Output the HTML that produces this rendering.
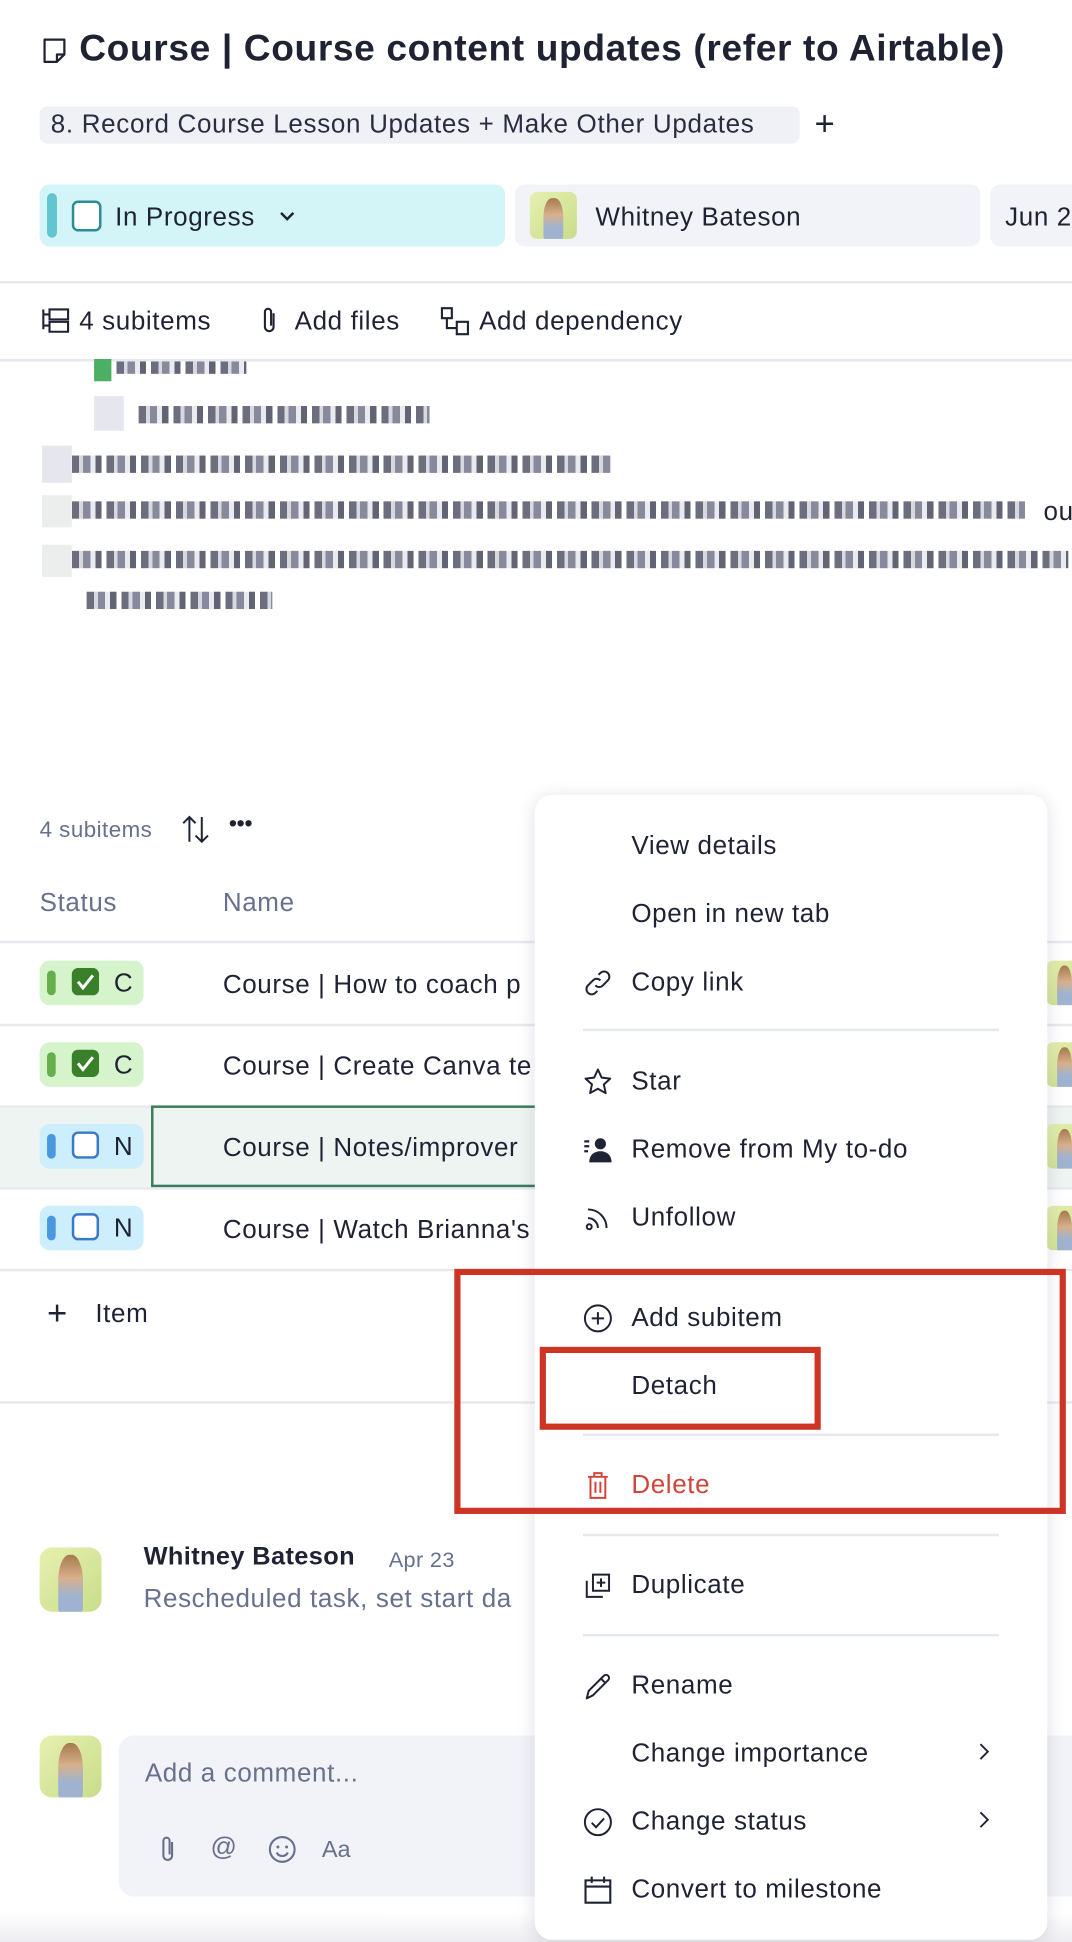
<!DOCTYPE html>
<html><head><meta charset="utf-8"><style>
html,body{margin:0;padding:0;background:#fff;overflow:hidden}
body{width:1072px;height:1942px;position:relative}
#w{position:absolute;left:0;top:0;width:866px;height:1569px;transform:scale(1.2379);transform-origin:0 0;font-family:"Liberation Sans",sans-serif;color:#1f2233}
.a{position:absolute;white-space:nowrap}
.t21{font-size:21px;letter-spacing:0.5px}
.line{position:absolute;height:1.5px;background:#e8e9f0}
.blur{position:absolute;height:14px;background:repeating-linear-gradient(90deg,#3a3d52 0 6px,#c9cbd6 6px 9px,#60637a 9px 15px,#e3e4ea 15px 19px,#2e3045 19px 24px,#fff 24px 28px);opacity:.75}
.chip{position:absolute;left:32px;width:84px;height:36px;border-radius:8px}
.bar{position:absolute;left:6px;top:8px;width:7px;height:20px;border-radius:4px}
.cb{position:absolute;left:26px;top:6px;width:22px;height:22px;border-radius:5px;box-sizing:border-box}
.mi{position:absolute;left:510px;font-size:21px;letter-spacing:0.5px;color:#1f2233;white-space:nowrap}
.ic{position:absolute;left:471px;width:24px;height:24px}
.sep{position:absolute;left:471px;width:336px;height:2px;background:#e6e8f0}
.av{position:absolute;border-radius:10px;background:linear-gradient(135deg,#e6f0b0,#c9dd8a);overflow:hidden}
.av:after{content:"";position:absolute;left:30%;top:12%;width:40%;height:90%;border-radius:45% 45% 10% 10%;background:linear-gradient(#a57a4e,#d8b08c 40%,#9fb3d0 70%)}
</style></head><body><div id="w">

<svg class="a" style="left:34px;top:30px" width="20" height="22" viewBox="0 0 20 22"><path d="M2 2h16v12l-6 6H2z M12 20v-6h6" fill="none" stroke="#1f2233" stroke-width="1.8" stroke-linejoin="round"/></svg>
<div class="a" style="left:64px;top:23px;font-size:30px;font-weight:bold;letter-spacing:0.5px">Course | Course content updates (refer to Airtable)</div>
<div class="a" style="left:32px;top:86px;width:614px;height:30px;background:#f0f1f7;border-radius:6px"></div>
<div class="a t21" style="left:41px;top:89px;color:#2a2d40;letter-spacing:0.55px">8. Record Course Lesson Updates + Make Other Updates</div>
<div class="a" style="left:658px;top:84px;font-size:28px;font-weight:300">+</div>

<div class="a" style="left:32px;top:149px;width:376px;height:50px;background:#d3f5f8;border-radius:8px"></div>
<div class="a" style="left:38px;top:156px;width:8px;height:36px;background:#62c5cf;border-radius:4px"></div>
<div class="a" style="left:58px;top:162px;width:24px;height:25px;border:2px solid #2f8c96;border-radius:5px;box-sizing:border-box;background:#fff"></div>
<div class="a t21" style="left:93px;top:164px">In Progress</div>
<svg class="a" style="left:225px;top:168px" width="14" height="14"><path d="M2 4l5 5 5-5" fill="none" stroke="#1f2233" stroke-width="2"/></svg>
<div class="a" style="left:416px;top:149px;width:376px;height:50px;background:#f2f3f8;border-radius:8px"></div>
<div class="av" style="left:428px;top:155px;width:38px;height:38px;border-radius:6px"></div>
<div class="a t21" style="left:481px;top:164px">Whitney Bateson</div>
<div class="a" style="left:800px;top:149px;width:80px;height:50px;background:#f2f3f8;border-radius:8px"></div>
<div class="a t21" style="left:812px;top:164px">Jun 2</div>

<div class="line" style="left:0;top:227px;width:866px"></div>
<svg class="a" style="left:33px;top:248px" width="24" height="22" viewBox="0 0 24 22"><path d="M2 2v16M2 6h5M2 15h5M7 2h15v8H7zM7 12h15v8H7z" fill="none" stroke="#1f2233" stroke-width="1.7"/></svg>
<div class="a t21" style="left:64px;top:248px">4 subitems</div>
<svg class="a" style="left:210px;top:247px" width="16" height="24" viewBox="0 0 16 24"><path d="M11 6v11a3.5 3.5 0 0 1-7 0V5a2.5 2.5 0 0 1 5 0v11" fill="none" stroke="#1f2233" stroke-width="1.7"/></svg>
<div class="a t21" style="left:238px;top:248px">Add files</div>
<svg class="a" style="left:355px;top:247px" width="26" height="26" viewBox="0 0 26 26"><path d="M2 2h8v8H2zM14 13h9v10h-9zM6 10v8h8" fill="none" stroke="#1f2233" stroke-width="1.7"/></svg>
<div class="a t21" style="left:387px;top:248px">Add dependency</div>
<div class="line" style="left:0;top:290px;width:866px"></div>

<div class="a" style="left:76px;top:290px;width:14px;height:18px;background:#4caf63"></div>
<div class="blur" style="left:94px;top:292px;width:105px;height:10px"></div>
<div class="a" style="left:76px;top:320px;width:24px;height:28px;background:#e6e7ee"></div>
<div class="blur" style="left:112px;top:328px;width:235px"></div>
<div class="a" style="left:34px;top:360px;width:24px;height:30px;background:#e6e7ee"></div>
<div class="blur" style="left:58px;top:368px;width:435px"></div>
<div class="a" style="left:34px;top:400px;width:24px;height:26px;background:#eceded"></div>
<div class="blur" style="left:58px;top:405px;width:770px"></div>
<div class="a t21" style="left:843px;top:402px">ou</div>
<div class="a" style="left:34px;top:440px;width:24px;height:26px;background:#eceded"></div>
<div class="blur" style="left:58px;top:445px;width:805px"></div>
<div class="blur" style="left:70px;top:478px;width:150px"></div>

<div class="a" style="left:32px;top:660px;font-size:18px;letter-spacing:0.4px;color:#67708c">4 subitems</div>
<svg class="a" style="left:146px;top:657px" width="24" height="26" viewBox="0 0 24 26"><path d="M7 23V3M2 8l5-5 5 5M17 3v20M12 18l5 5 5-5" fill="none" stroke="#1f2233" stroke-width="1.6"/></svg>
<div class="a" style="left:185px;top:655px;font-size:18px;font-weight:bold;letter-spacing:0px">•••</div>
<div class="a t21" style="left:32px;top:718px;color:#67708c">Status</div>
<div class="a t21" style="left:180px;top:718px;color:#67708c">Name</div>
<div class="line" style="left:0;top:760px;width:866px;height:2px"></div>
<div class="a" style="left:0;top:893px;width:866px;height:66px;background:#eef4f1"></div>
<div class="line" style="left:0;top:827px;width:866px;height:2px"></div>
<div class="line" style="left:0;top:893px;width:866px;height:2px"></div>
<div class="line" style="left:0;top:959px;width:866px;height:2px"></div>
<div class="line" style="left:0;top:1025px;width:866px;height:2px"></div>
<div class="a" style="left:122px;top:893px;width:320px;height:66px;border:2px solid #3b7c5e;box-sizing:border-box"></div>

<div class="chip" style="top:776px;background:#d5f4cc"><div class="bar" style="background:#64ae4b"></div><div class="cb" style="background:#3a7f2a"><svg width="22" height="22"><path d="M5 11l4 5 8-10" fill="none" stroke="#fff" stroke-width="2.4"/></svg></div><div class="a t21" style="left:60px;top:7px">C</div></div>
<div class="chip" style="top:842px;background:#d5f4cc"><div class="bar" style="background:#64ae4b"></div><div class="cb" style="background:#3a7f2a"><svg width="22" height="22"><path d="M5 11l4 5 8-10" fill="none" stroke="#fff" stroke-width="2.4"/></svg></div><div class="a t21" style="left:60px;top:7px">C</div></div>
<div class="chip" style="top:908px;background:#cdeefd"><div class="bar" style="background:#4a98de"></div><div class="cb" style="border:2px solid #3a78c8;background:#fff"></div><div class="a t21" style="left:60px;top:7px">N</div></div>
<div class="chip" style="top:974px;background:#cdeefd"><div class="bar" style="background:#4a98de"></div><div class="cb" style="border:2px solid #3a78c8;background:#fff"></div><div class="a t21" style="left:60px;top:7px">N</div></div>
<div class="a t21" style="left:180px;top:784px">Course | How to coach p</div>
<div class="a t21" style="left:180px;top:850px">Course | Create Canva te</div>
<div class="a t21" style="left:180px;top:916px">Course | Notes/improver</div>
<div class="a t21" style="left:180px;top:982px">Course | Watch Brianna's</div>
<div class="av" style="left:845px;top:776px;width:30px;height:36px;border-radius:6px"></div>
<div class="av" style="left:845px;top:842px;width:30px;height:36px;border-radius:6px"></div>
<div class="av" style="left:845px;top:908px;width:30px;height:36px;border-radius:6px"></div>
<div class="av" style="left:845px;top:974px;width:30px;height:36px;border-radius:6px"></div>
<div class="a" style="left:38px;top:1045px;font-size:28px;font-weight:300">+</div>
<div class="a t21" style="left:77px;top:1050px">Item</div>
<div class="line" style="left:0;top:1132px;width:866px"></div>

<div class="av" style="left:32px;top:1250px;width:50px;height:52px"></div>
<div class="a" style="left:116px;top:1246px;font-size:20.5px;font-weight:bold;letter-spacing:0.3px">Whitney Bateson</div>
<div class="a" style="left:314px;top:1250px;font-size:17.5px;letter-spacing:0.3px;color:#67708c">Apr 23</div>
<div class="a t21" style="left:116px;top:1280px;color:#67708c">Rescheduled task, set start da</div>
<div class="av" style="left:32px;top:1402px;width:50px;height:50px"></div>
<div class="a" style="left:96px;top:1402px;width:800px;height:130px;background:#f2f3f8;border-radius:12px"></div>
<div class="a t21" style="left:117px;top:1421px;color:#67708c">Add a comment...</div>
<svg class="a" style="left:128px;top:1482px" width="16" height="24" viewBox="0 0 16 24"><path d="M11 6v11a3.5 3.5 0 0 1-7 0V5a2.5 2.5 0 0 1 5 0v11" fill="none" stroke="#67708c" stroke-width="1.7"/></svg>
<div class="a" style="left:170px;top:1481px;font-size:21px;color:#67708c">@</div>
<svg class="a" style="left:216px;top:1482px" width="24" height="24" viewBox="0 0 24 24"><circle cx="12" cy="12" r="10" fill="none" stroke="#67708c" stroke-width="1.7"/><circle cx="8.5" cy="10" r="1.2" fill="#67708c"/><circle cx="15.5" cy="10" r="1.2" fill="#67708c"/><path d="M7.5 14.5a5 5 0 0 0 9 0" fill="none" stroke="#67708c" stroke-width="1.7"/></svg>
<div class="a" style="left:260px;top:1484px;font-size:19px;color:#67708c">Aa</div>
<div class="a" style="left:0;top:1545px;width:866px;height:24px;background:linear-gradient(#fff0,#ececf0)"></div>

<div class="a" style="left:432px;top:642px;width:414px;height:925px;background:#fff;border-radius:14px;box-shadow:0 2px 14px rgba(30,35,70,.14)"></div>
<div class="mi" style="top:672px">View details</div>
<div class="mi" style="top:727px">Open in new tab</div>
<svg class="ic" style="top:782px" viewBox="0 0 24 24"><path d="M10 14a4 4 0 0 0 6 0l4-4a4 4 0 0 0-6-6l-1.5 1.5M14 10a4 4 0 0 0-6 0l-4 4a4 4 0 0 0 6 6l1.5-1.5" fill="none" stroke="#1f2233" stroke-width="1.6"/></svg>
<div class="mi" style="top:782px">Copy link</div>
<div class="sep" style="top:831px"></div>
<svg class="ic" style="top:862px" viewBox="0 0 24 24"><path d="M12 2l3 6.5 7 .8-5.2 4.8 1.5 7L12 17.5 5.7 21l1.5-7L2 9.3l7-.8z" fill="none" stroke="#1f2233" stroke-width="1.6" stroke-linejoin="round"/></svg>
<div class="mi" style="top:862px">Star</div>
<svg class="ic" style="top:917px" viewBox="0 0 24 24"><circle cx="14" cy="7" r="4.5" fill="#1f2233"/><path d="M5 22c0-6 4-9 9-9s9 3 9 9z" fill="#1f2233"/><path d="M1 5h4M1 9h4M1 13h3" stroke="#1f2233" stroke-width="1.8"/></svg>
<div class="mi" style="top:917px">Remove from My to-do</div>
<svg class="ic" style="top:972px" viewBox="0 0 24 24"><circle cx="5" cy="19" r="2" fill="none" stroke="#1f2233" stroke-width="1.6"/><path d="M4 12a8 8 0 0 1 8 8M4 5a15 15 0 0 1 15 15" fill="none" stroke="#1f2233" stroke-width="1.6"/></svg>
<div class="mi" style="top:972px">Unfollow</div>
<svg class="ic" style="top:1053px" viewBox="0 0 24 24"><circle cx="12" cy="12" r="10.5" fill="none" stroke="#1f2233" stroke-width="1.6"/><path d="M12 7v10M7 12h10" stroke="#1f2233" stroke-width="1.6"/></svg>
<div class="mi" style="top:1053px">Add subitem</div>
<div class="mi" style="top:1108px">Detach</div>
<div class="sep" style="top:1158px"></div>
<svg class="ic" style="top:1188px" viewBox="0 0 24 24"><path d="M4 5h16M9 5V2h6v3M6 5v17h12V5M10 9v9M14 9v9" fill="none" stroke="#d0443a" stroke-width="1.6"/></svg>
<div class="mi" style="top:1188px;color:#d0443a">Delete</div>
<div class="sep" style="top:1239px"></div>
<svg class="ic" style="top:1269px" viewBox="0 0 24 24"><path d="M8 3h13v13H8zM3 8v13h13M14.5 6v7M11 9.5h7" fill="none" stroke="#1f2233" stroke-width="1.6"/></svg>
<div class="mi" style="top:1269px">Duplicate</div>
<div class="sep" style="top:1320px"></div>
<svg class="ic" style="top:1350px" viewBox="0 0 24 24"><path d="M3 22l1.5-6L17 3.5a2.5 2.5 0 0 1 3.5 3.5L8 19.5zM14.5 6l3.5 3.5" fill="none" stroke="#1f2233" stroke-width="1.6" stroke-linejoin="round"/></svg>
<div class="mi" style="top:1350px">Rename</div>
<div class="mi" style="top:1405px">Change importance</div>
<svg class="a" style="left:789px;top:1407px" width="12" height="16"><path d="M3 2l6 6-6 6" fill="none" stroke="#1f2233" stroke-width="1.5"/></svg>
<svg class="ic" style="top:1460px" viewBox="0 0 24 24"><circle cx="12" cy="12" r="10.5" fill="none" stroke="#1f2233" stroke-width="1.6"/><path d="M7 12.5l3.5 3.5L17 9" fill="none" stroke="#1f2233" stroke-width="1.6"/></svg>
<div class="mi" style="top:1460px">Change status</div>
<svg class="a" style="left:789px;top:1462px" width="12" height="16"><path d="M3 2l6 6-6 6" fill="none" stroke="#1f2233" stroke-width="1.5"/></svg>
<svg class="ic" style="top:1515px" viewBox="0 0 24 24"><path d="M2 4h20v18H2zM2 9h20M7 1v5M17 1v5" fill="none" stroke="#1f2233" stroke-width="1.7"/></svg>
<div class="mi" style="top:1515px">Convert to milestone</div>

<div class="a" style="left:367px;top:1025px;width:494px;height:198px;border:5px solid #cc3524;box-sizing:border-box"></div>
<div class="a" style="left:436px;top:1088px;width:227px;height:67px;border:5px solid #cc3524;box-sizing:border-box"></div>
</div></body></html>
